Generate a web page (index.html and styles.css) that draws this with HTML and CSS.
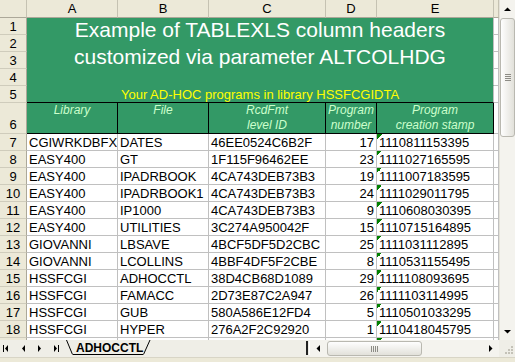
FILE: index.html
```html
<!DOCTYPE html>
<html lang="en">
<head>
  <meta charset="UTF-8">
  <title>ADHOCCTL - TABLEXLS</title>
  <link rel="stylesheet" href="styles.css">
</head>
<body>

<div class="window">

  <div class="sheet-area">
    <div class="grid">
      <table class="sheet">
        <colgroup>
          <col class="c-rh"><col class="c-a"><col class="c-b"><col class="c-c"><col class="c-d"><col class="c-e"><col class="c-f">
        </colgroup>
        <thead>
          <tr class="colhead">
            <th class="corner"></th><th>A</th><th>B</th><th>C</th><th>D</th><th>E</th><th></th>
          </tr>
        </thead>
        <tbody>
          <tr>
            <td class="rh">1</td>
            <td class="band title" colspan="5" rowspan="4">
              <div class="title-text">Example of TABLEXLS column headers<br>customized via parameter ALTCOLHDG</div>
            </td>
            <td></td>
          </tr>
          <tr><td class="rh">2</td><td></td></tr>
          <tr><td class="rh">3</td><td></td></tr>
          <tr><td class="rh">4</td><td></td></tr>
          <tr>
            <td class="rh">5</td>
            <td class="band subtitle" colspan="5">Your AD-HOC programs in library HSSFCGIDTA</td>
            <td></td>
          </tr>
          <tr>
            <td class="rh tall">6</td>
            <td class="hd">Library</td>
            <td class="hd">File</td>
            <td class="hd">RcdFmt<br>level ID</td>
            <td class="hd">Program<br>number</td>
            <td class="hd">Program<br>creation stamp</td>
            <td></td>
          </tr>
          <tr><td class="rh">7</td><td>CGIWRKDBFX</td><td>DATES</td><td>46EE0524C6B2F</td><td class="num">17</td><td class="stamp">1110811153395</td><td></td></tr>
          <tr><td class="rh">8</td><td>EASY400</td><td>GT</td><td>1F115F96462EE</td><td class="num">23</td><td class="stamp">1111027165595</td><td></td></tr>
          <tr><td class="rh">9</td><td>EASY400</td><td>IPADRBOOK</td><td>4CA743DEB73B3</td><td class="num">19</td><td class="stamp">1111007183595</td><td></td></tr>
          <tr><td class="rh">10</td><td>EASY400</td><td>IPADRBOOK1</td><td>4CA743DEB73B3</td><td class="num">24</td><td class="stamp">1111029011795</td><td></td></tr>
          <tr><td class="rh">11</td><td>EASY400</td><td>IP1000</td><td>4CA743DEB73B3</td><td class="num">9</td><td class="stamp">1110608030395</td><td></td></tr>
          <tr><td class="rh">12</td><td>EASY400</td><td>UTILITIES</td><td>3C274A950042F</td><td class="num">15</td><td class="stamp">1110715164895</td><td></td></tr>
          <tr><td class="rh">13</td><td>GIOVANNI</td><td>LBSAVE</td><td>4BCF5DF5D2CBC</td><td class="num">25</td><td class="stamp">1111031112895</td><td></td></tr>
          <tr><td class="rh">14</td><td>GIOVANNI</td><td>LCOLLINS</td><td>4BBF4DF5F2CBE</td><td class="num">8</td><td class="stamp">1110531155495</td><td></td></tr>
          <tr><td class="rh">15</td><td>HSSFCGI</td><td>ADHOCCTL</td><td>38D4CB68D1089</td><td class="num">29</td><td class="stamp">1111108093695</td><td></td></tr>
          <tr><td class="rh">16</td><td>HSSFCGI</td><td>FAMACC</td><td>2D73E87C2A947</td><td class="num">26</td><td class="stamp">1111103114995</td><td></td></tr>
          <tr><td class="rh">17</td><td>HSSFCGI</td><td>GUB</td><td>580A586E12FD4</td><td class="num">5</td><td class="stamp">1110501033295</td><td></td></tr>
          <tr><td class="rh">18</td><td>HSSFCGI</td><td>HYPER</td><td>276A2F2C92920</td><td class="num">1</td><td class="stamp">1110418045795</td><td></td></tr>
          <!-- row 19: only its top edge shows above the tabs -->
          <tr><td class="rh"></td><td></td><td></td><td></td><td></td><td class="stamp"></td><td></td></tr>
        </tbody>
      </table>
    </div>

    <div class="vscroll">
      <div class="sb-btn">
        <svg width="7" height="4" viewBox="0 0 7 4"><path d="M0 4H7L3.5 0.5Z" fill="#000"/></svg>
      </div>
      <div class="sb-thumb">
        <span class="grip-h"></span><span class="grip-h"></span><span class="grip-h"></span><span class="grip-h"></span>
      </div>
      <div class="sb-track"></div>
      <div class="sb-btn">
        <svg width="7" height="4" viewBox="0 0 7 4"><path d="M0 0H7L3.5 3.5Z" fill="#000"/></svg>
      </div>
    </div>
  </div>

  <div class="tabbar">
    <svg class="tab-nav" width="64" height="17" viewBox="0 0 64 17">
      <!-- first / previous / next / last sheet -->
      <path d="M3 5h1v7H3Z M8 5v7L5 8.5Z" fill="#000"/>
      <path d="M25 5v7L22 8.5Z" fill="#000"/>
      <path d="M38 5v7L41 8.5Z" fill="#000"/>
      <path d="M54 5v7L57 8.5Z M58 5h1v7h-1Z" fill="#000"/>
    </svg>
    <div class="tab">
      <svg width="7" height="17" viewBox="0 0 7 17"><path d="M0.5 0L6.5 14.5" stroke="#000" fill="none"/></svg>
      <span class="tab-label">ADHOCCTL</span>
      <svg width="8" height="17" viewBox="0 0 8 17"><path d="M0.5 14.5L7 0" stroke="#000" fill="none"/></svg>
    </div>
    <div class="tab-space"></div>
    <div class="split"></div>
    <div class="hscroll">
      <div class="hb-btn">
        <svg width="4" height="7" viewBox="0 0 4 7"><path d="M4 0V7L0.5 3.5Z" fill="#000"/></svg>
      </div>
      <div class="hb-thumb">
        <span class="grip-v"></span><span class="grip-v"></span><span class="grip-v"></span><span class="grip-v"></span>
      </div>
      <div class="sb-track"></div>
      <div class="hb-btn">
        <svg width="4" height="7" viewBox="0 0 4 7"><path d="M0 0V7L3.5 3.5Z" fill="#000"/></svg>
      </div>
    </div>
    <div class="size-corner">
      <svg width="16" height="17" viewBox="0 0 16 17">
        <path d="M12 6h2v2h-2Z M9 9h2v2H9Z M12 9h2v2h-2Z M6 12h2v2H6Z M9 12h2v2H9Z M12 12h2v2h-2Z" fill="#c4c2b8"/>
      </svg>
    </div>
  </div>

  <div class="status-bar"></div>

</div>

</body>
</html>
```

FILE: styles.css
```css
* {
  box-sizing: border-box;
}

body {
  margin: 0;
  font-family: "Liberation Sans", Arial, sans-serif;
  background: #ece9d8;
}

.window {
  width: 515px;
  height: 362px;
  display: flex;
  flex-direction: column;
  overflow: hidden;
}

/* ---- sheet ---- */

.sheet-area {
  display: flex;
  height: 340px;
}

.grid {
  width: 499px;
  height: 340px;
  overflow: hidden;
  background: #fff;
}

.sheet {
  border-collapse: separate;
  border-spacing: 0;
  table-layout: fixed;
  width: 499px;
}

.c-rh { width: 27px; }
.c-a  { width: 91px; }
.c-b  { width: 91px; }
.c-c  { width: 117px; }
.c-d  { width: 51px; }
.c-e  { width: 117px; }
.c-f  { width: 5px; }

.sheet th,
.sheet td {
  height: 17px;
  padding: 2px 2px 0;
  font-size: 13px;
  font-weight: normal;
  line-height: 14px;
  color: #000;
  text-align: left;
  vertical-align: top;
  white-space: nowrap;
  overflow: hidden;
  border-right: 1px solid #c0c0c0;
  border-bottom: 1px solid #c0c0c0;
}

.colhead th {
  height: 18px;
  background: #ece9d8;
  text-align: center;
  border-right-color: #c5c2b2;
  border-bottom-color: #aca899;
}

.sheet td.rh {
  background: #ece9d8;
  text-align: center;
  padding: 2px 0 0;
  border-right-color: #aca899;
  border-bottom-color: #cfccbc;
}

.sheet td.tall {
  vertical-align: bottom;
  padding: 0 0 1px;
}

.sheet td.band {
  background: #339966;
  border-bottom-color: #339966;
}

.sheet td.title {
  padding: 0;
  color: #fff;
  font-size: 21px;
  line-height: 27px;
  text-align: center;
}

.title-text {
  margin-top: -2px;
}

.sheet td.subtitle {
  color: #ffff00;
  text-align: center;
  border-bottom-color: #000;
}

.sheet td.hd {
  height: 30px;
  padding: 0 1px;
  background: #339966;
  color: #ccffcc;
  font-size: 12px;
  font-style: italic;
  line-height: 15px;
  text-align: center;
  white-space: normal;
  border-right-color: #000;
  border-bottom-color: #000;
}

.sheet td.num {
  text-align: right;
}

.sheet td.stamp {
  background: linear-gradient(135deg, #008000 50%, transparent 50%) 0 0 / 5px 5px no-repeat;
}

/* ---- scrollbars ---- */

.vscroll {
  width: 16px;
  height: 340px;
  display: flex;
  flex-direction: column;
  background: #f4f3ee;
  border-left: 1px solid #e4e2d8;
}

.sb-btn {
  height: 17px;
  display: flex;
  align-items: center;
  justify-content: center;
}

.sb-thumb {
  height: 119px;
  margin: 1px 0 0;
  border: 1px solid #b9b8b0;
  border-radius: 3px;
  background: linear-gradient(90deg, #fefefe, #e2e1da);
  display: flex;
  flex-direction: column;
  align-items: center;
  justify-content: center;
  gap: 1px;
}

.grip-h {
  width: 6px;
  height: 1px;
  background: #8d8c86;
}

.sb-track {
  flex: 1;
}

/* ---- sheet tabs ---- */

.tabbar {
  height: 17px;
  display: flex;
  background: #efeee7;
}

.tab-nav {
  flex: none;
}

.tab {
  display: flex;
  margin-left: 2px;
}

.tab-label {
  height: 15px;
  padding: 2px 0 0 3px;
  width: 70px;
  font-size: 12px;
  font-weight: bold;
  line-height: 12px;
  border-bottom: 1px solid #000;
}

.tab-space {
  flex: 1;
}

.split {
  width: 4px;
  margin: 1px 0 2px;
  border-left: 2px solid #222;
  border-right: 1px solid #fff;
}

.hscroll {
  width: 189px;
  display: flex;
  background: #f4f3ee;
}

.hb-btn {
  width: 16px;
  display: flex;
  align-items: center;
  justify-content: center;
}

.hb-thumb {
  width: 95px;
  margin: 1px 0 1px 1px;
  border: 1px solid #b9b8b0;
  border-radius: 3px;
  background: linear-gradient(180deg, #fefefe, #e2e1da);
  display: flex;
  align-items: center;
  justify-content: center;
  gap: 1px;
}

.grip-v {
  width: 1px;
  height: 6px;
  background: #8d8c86;
}

.size-corner {
  width: 16px;
}

.status-bar {
  flex: 1;
  background: #ece9d8;
  border-top: 1px solid #d8d5c6;
}
```
